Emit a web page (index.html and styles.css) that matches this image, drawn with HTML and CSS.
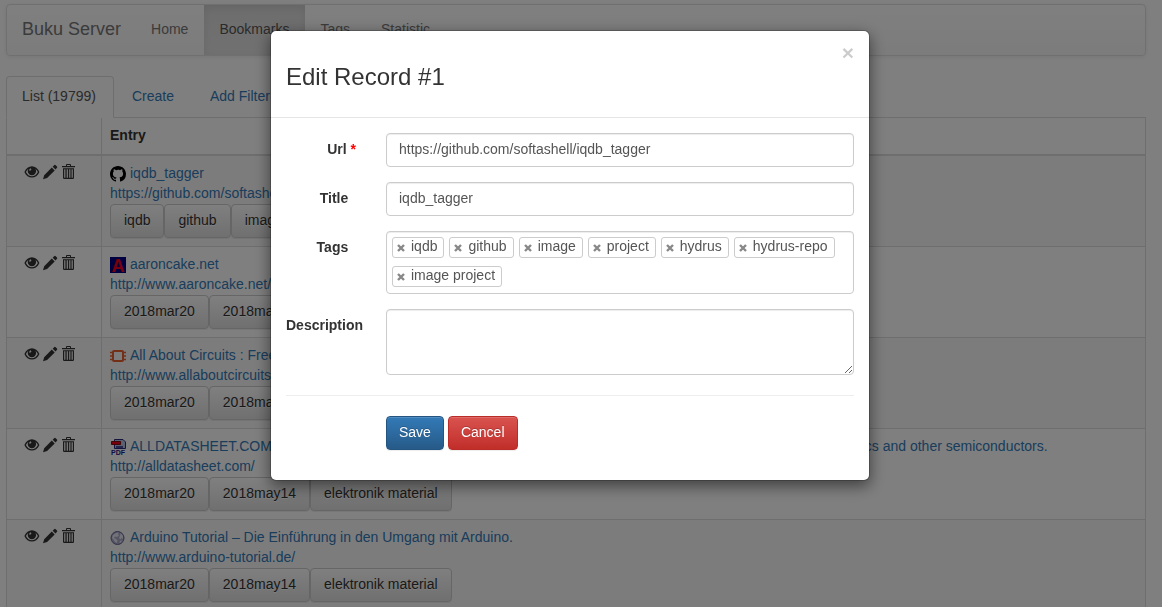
FILE: index.html
```html
<!DOCTYPE html>
<html lang="en">
<head>
<meta charset="utf-8">
<title>Bookmarks - Buku Server</title>
<link rel="stylesheet" href="styles.css">
</head>
<body>
<svg class="sprite" aria-hidden="true">
  <symbol id="eye" viewBox="0 0 16 16">
    <path fill-rule="evenodd" d="M.4 8C2 4.300 4.700 2.200 7.900 2.200S13.800 4.300 15.400 8C13.800 11.700 11.100 13.600 7.900 13.600S2 11.700 .4 8ZM1.900 8C3.300 10.800 5.400 12.300 7.900 12.300S12.500 10.800 13.900 8C13.200 6.500 12.400 5.500 11.400 4.700Q12.100 5.800 12.100 7.100A4.200 4.200 0 0 1 3.700 7.100Q3.700 5.800 4.400 4.700C3.400 5.500 2.600 6.500 1.900 8ZM6.700 4.200Q5.300 4.800 5.100 6.400L6.400 6.800Q6.600 5.900 7.500 5.500Z"/>
  </symbol>
  <symbol id="pencil" viewBox="0 0 16 16">
    <path d="M0 15.200L1.200 11.200L8.800 3.600L11.700 6.500L4.100 14.100ZM9.700 2.700L11.400 1.100Q12 .6 12.700 1.200L14 2.500Q14.600 3.200 14 3.800L12.500 5.500Z"/>
  </symbol>
  <symbol id="trash" viewBox="0 0 16 16">
    <path fill-rule="evenodd" d="M4 2V.8Q4 0 5 0H8Q9 0 9 .8V2H13V3.300H0V2ZM5 2H8V1H5ZM1 4.200H12V13.800Q12 15 10.800 15H2.200Q1 15 1 13.800ZM2.200 5.300V13.800H3.400V5.300ZM4.700 5.300V13.800H5.900V5.300ZM7.200 5.300V13.800H8.400V5.300ZM9.600 5.300V13.800H10.800V5.300Z"/>
  </symbol>
</svg>

<div class="page">
  <nav class="navbar">
    <a class="navbar-brand" href="#">Buku Server</a>
    <a class="navbar-link" href="#">Home</a>
    <a class="navbar-link active" href="#">Bookmarks</a>
    <a class="navbar-link" href="#">Tags</a>
    <a class="navbar-link" href="#">Statistic</a>
  </nav>

  <div class="tabs">
    <a class="tab active" href="#">List (19799)</a>
    <a class="tab" href="#">Create</a>
    <a class="tab" href="#">Add Filter</a>
  </div>

  <table class="records">
    <thead>
      <tr><th class="actions-col"></th><th>Entry</th></tr>
    </thead>
    <tbody>
      <tr>
        <td><div class="actions"><a href="#" aria-label="View"><svg class="icon"><use href="#eye"/></svg></a><a href="#" aria-label="Edit"><svg class="icon"><use href="#pencil"/></svg></a><button type="button" aria-label="Delete"><svg class="icon"><use href="#trash"/></svg></button></div></td>
        <td>
          <div class="entry-title">
            <svg class="favicon" viewBox="0 0 16 16"><path d="M8 0C3.580 0 0 3.580 0 8c0 3.540 2.290 6.530 5.470 7.590.4.070.55-.17.55-.38v-1.490c-2.230.48-2.700-.95-2.700-.95-.36-.92-.89-1.170-.89-1.170-.73-.5.060-.49.060-.49.800.060 1.230.83 1.230.83.71 1.220 1.870.87 2.330.66.070-.52.280-.87.510-1.070-1.780-.2-3.640-.89-3.640-3.950 0-.87.310-1.590.82-2.150-.08-.2-.36-1.020.08-2.120 0 0 .67-.21 2.200.82A7.600 7.600 0 0 1 8 3.860c.68 0 1.360.09 2 .27 1.530-1.040 2.200-.82 2.200-.82.44 1.100.16 1.920.08 2.120.51.56.82 1.270.82 2.150 0 3.070-1.870 3.750-3.650 3.950.29.25.54.73.54 1.480v2.200c0 .21.150.46.550.38A8 8 0 0 0 16 8c0-4.420-3.580-8-8-8Z"/></svg>
            <a href="#">iqdb_tagger</a>
          </div>
          <div><a href="#">https://github.com/softashell/iqdb_tagger</a></div>
          <div class="entry-tags"><a class="btn" href="#">iqdb</a><a class="btn" href="#">github</a><a class="btn" href="#">image</a><a class="btn" href="#">project</a><a class="btn" href="#">hydrus</a></div>
        </td>
      </tr>
      <tr>
        <td><div class="actions"><a href="#" aria-label="View"><svg class="icon"><use href="#eye"/></svg></a><a href="#" aria-label="Edit"><svg class="icon"><use href="#pencil"/></svg></a><button type="button" aria-label="Delete"><svg class="icon"><use href="#trash"/></svg></button></div></td>
        <td>
          <div class="entry-title">
            <svg class="favicon" viewBox="0 0 16 16"><rect width="16" height="16" fill="#000080"/><text class="favicon-letter" x="8" y="15" text-anchor="middle">A</text></svg>
            <a href="#">aaroncake.net</a>
          </div>
          <div><a href="#">http://www.aaroncake.net/</a></div>
          <div class="entry-tags"><a class="btn" href="#">2018mar20</a><a class="btn" href="#">2018may14</a></div>
        </td>
      </tr>
      <tr>
        <td><div class="actions"><a href="#" aria-label="View"><svg class="icon"><use href="#eye"/></svg></a><a href="#" aria-label="Edit"><svg class="icon"><use href="#pencil"/></svg></a><button type="button" aria-label="Delete"><svg class="icon"><use href="#trash"/></svg></button></div></td>
        <td>
          <div class="entry-title">
            <svg class="favicon" viewBox="0 0 16 16" fill="none" stroke="#e8602c"><rect x="3" y="3" width="10" height="10" rx="1" stroke-width="2"/><path d="M0 4.500H3M0 8H3M0 11.500H3M13 4.500H16M13 8H16M13 11.500H16" stroke-width="1.500"/></svg>
            <a href="#">All About Circuits : Free Electric Circuits Textbooks</a>
          </div>
          <div><a href="#">http://www.allaboutcircuits.com/</a></div>
          <div class="entry-tags"><a class="btn" href="#">2018mar20</a><a class="btn" href="#">2018may14</a></div>
        </td>
      </tr>
      <tr>
        <td><div class="actions"><a href="#" aria-label="View"><svg class="icon"><use href="#eye"/></svg></a><a href="#" aria-label="Edit"><svg class="icon"><use href="#pencil"/></svg></a><button type="button" aria-label="Delete"><svg class="icon"><use href="#trash"/></svg></button></div></td>
        <td>
          <div class="entry-title">
            <svg class="favicon" viewBox="0 0 16 16"><path d="M4.500.5H13L15.500 3V9.500H4.500Z" fill="#b5c4e4" stroke="#28287c"/><path d="M6 8H13" stroke="#28287c" stroke-width="1.500"/><path d="M1.500 2.500H10.500V5.500H1.500Z" fill="#f00018" stroke="#7c1010"/><text class="favicon-caption" x="8" y="16" text-anchor="middle">PDF</text></svg>
            <a href="#">ALLDATASHEET.COM - Datasheet search site for Electronic Components and Semiconductors, integrated circuits, triacs and other semiconductors.</a>
          </div>
          <div><a href="#">http://alldatasheet.com/</a></div>
          <div class="entry-tags"><a class="btn" href="#">2018mar20</a><a class="btn" href="#">2018may14</a><a class="btn" href="#">elektronik material</a></div>
        </td>
      </tr>
      <tr>
        <td><div class="actions"><a href="#" aria-label="View"><svg class="icon"><use href="#eye"/></svg></a><a href="#" aria-label="Edit"><svg class="icon"><use href="#pencil"/></svg></a><button type="button" aria-label="Delete"><svg class="icon"><use href="#trash"/></svg></button></div></td>
        <td>
          <div class="entry-title">
            <svg class="favicon" viewBox="0 0 16 16"><circle cx="7.500" cy="8" r="6.500" fill="#a9a9c4" stroke="#626092"/><path d="M6 3L9 2.500L8 4L9 5.500L7 7L5 6.500L4 8L6 9L7.500 10.500L6.500 13L5 12L4 10L2 8L3 5ZM10.500 3L13 6L13 9L11.500 8L10.500 9.500L9 8L10 6ZM10 11L12 10.500L11 12.500L9.500 13Z" fill="#e4e6f4"/></svg>
            <a href="#">Arduino Tutorial – Die Einführung in den Umgang mit Arduino.</a>
          </div>
          <div><a href="#">http://www.arduino-tutorial.de/</a></div>
          <div class="entry-tags"><a class="btn" href="#">2018mar20</a><a class="btn" href="#">2018may14</a><a class="btn" href="#">elektronik material</a></div>
        </td>
      </tr>
    </tbody>
  </table>
</div>

<div class="overlay">
  <div class="modal" role="dialog" aria-modal="true" aria-labelledby="modal-title">
    <div class="modal-header">
      <h3 id="modal-title">Edit Record #1</h3>
      <button class="close" type="button" aria-label="Close">×</button>
    </div>
    <form class="modal-body">
      <div class="field">
        <label for="url">Url <span class="required">*</span></label>
        <input class="control" id="url" type="text" value="https://github.com/softashell/iqdb_tagger">
      </div>
      <div class="field">
        <label for="title">Title&nbsp;&nbsp;</label>
        <input class="control" id="title" type="text" value="iqdb_tagger">
      </div>
      <div class="field">
        <span class="label" id="tags-label">Tags&nbsp;&nbsp;</span>
        <ul class="control chips" aria-labelledby="tags-label">
          <li><button type="button" aria-label="Remove iqdb"><svg viewBox="0 0 8 8"><path d="M1 1L7 7M7 1L1 7"/></svg></button>iqdb</li>
          <li><button type="button" aria-label="Remove github"><svg viewBox="0 0 8 8"><path d="M1 1L7 7M7 1L1 7"/></svg></button>github</li>
          <li><button type="button" aria-label="Remove image"><svg viewBox="0 0 8 8"><path d="M1 1L7 7M7 1L1 7"/></svg></button>image</li>
          <li><button type="button" aria-label="Remove project"><svg viewBox="0 0 8 8"><path d="M1 1L7 7M7 1L1 7"/></svg></button>project</li>
          <li><button type="button" aria-label="Remove hydrus"><svg viewBox="0 0 8 8"><path d="M1 1L7 7M7 1L1 7"/></svg></button>hydrus</li>
          <li><button type="button" aria-label="Remove hydrus-repo"><svg viewBox="0 0 8 8"><path d="M1 1L7 7M7 1L1 7"/></svg></button>hydrus-repo</li>
          <li><button type="button" aria-label="Remove image project"><svg viewBox="0 0 8 8"><path d="M1 1L7 7M7 1L1 7"/></svg></button>image project</li>
        </ul>
      </div>
      <div class="field">
        <label for="description">Description</label>
        <textarea class="control" id="description"></textarea>
      </div>
      <hr>
      <div class="form-buttons">
        <button class="btn btn-primary" type="submit">Save</button>
        <button class="btn btn-danger" type="button">Cancel</button>
      </div>
    </form>
  </div>
</div>
</body>
</html>
```

FILE: styles.css
```css
*, *::before, *::after { box-sizing: border-box; }

body {
  margin: 0;
  overflow: hidden;
  background: #fff;
  color: #333;
  font: 14px/20px "Liberation Sans", Arial, sans-serif;
}

a { color: #337ab7; text-decoration: none; }
button { font: inherit; cursor: pointer; }
.sprite { display: none; }

.page { padding: 4px 16px 0 6px; }

/* Navigation */
.navbar {
  display: flex;
  margin-bottom: 20px;
  border: 1px solid #e0e0e0;
  border-radius: 4px;
  background: linear-gradient(#fff, #f8f8f8);
  box-shadow: inset 0 1px 0 rgba(255, 255, 255, .15), 0 1px 5px rgba(0, 0, 0, .075);
}
.navbar a { padding: 14px 15px 16px; color: #777; text-shadow: 0 1px 0 rgba(255, 255, 255, .25); }
.navbar .navbar-brand { font-size: 18px; }
.navbar .navbar-link { padding-right: 16px; }
.navbar .active {
  background: linear-gradient(#dbdbdb, #e2e2e2);
  box-shadow: inset 0 3px 9px rgba(0, 0, 0, .075);
  color: #555;
}

.tabs { display: flex; gap: 2px; border-bottom: 1px solid #ddd; }
.tab {
  margin-bottom: -1px;
  padding: 9px 17px 11px 15px;
  border: 1px solid transparent;
  border-radius: 4px 4px 0 0;
}
.tab.active { border-color: #ddd #ddd #fff; background: #fff; color: #555; }

/* Records */
.records {
  width: 100%;
  border-collapse: separate;
  border-spacing: 0;
  border-left: 1px solid #ddd;
}
.records th, .records td {
  padding: 7px 8px 8px;
  border-right: 1px solid #ddd;
  border-bottom: 1px solid #ddd;
  text-align: left;
  vertical-align: top;
}
.records th { padding-bottom: 9px; border-bottom-width: 2px; }
.records .actions-col { width: 95px; }
.records tbody tr:nth-child(odd) { background: #f9f9f9; }

.actions { display: flex; gap: 3px; padding: 1px 0 0 9px; }
.actions a, .actions button { display: flex; padding: 0; border: 0; background: none; color: #333; }
.icon { width: 16px; height: 16px; fill: currentColor; }
.entry-title { display: flex; align-items: flex-start; gap: 4px; }
.favicon { flex: none; width: 16px; height: 16px; margin-top: 3px; }
.favicon-letter { fill: #f00018; font-size: 18px; font-weight: 700; }
.favicon-caption { fill: #202088; font-size: 7px; font-weight: 700; }
.entry-tags { display: flex; margin-top: 1px; }

.btn {
  padding: 5px 12px 7px;
  border: 1px solid #ccc;
  border-radius: 4px;
  background: linear-gradient(#fff, #e0e0e0);
  box-shadow: inset 0 1px 0 rgba(255, 255, 255, .15), 0 1px 1px rgba(0, 0, 0, .075);
  color: #333;
  text-shadow: 0 1px 0 #fff;
}
.entry-tags .btn { padding-right: 13px; padding-left: 13px; }
.btn-primary, .btn-danger { color: #fff; text-shadow: 0 -1px 0 rgba(0, 0, 0, .2); }
.btn-primary { border-color: #245580; background: linear-gradient(#337ab7, #265a88); }
.btn-danger { border-color: #b92c28; background: linear-gradient(#d9534f, #c12e2a); }

/* Modal */
.overlay {
  position: fixed;
  inset: 0;
  padding: 30px 22px 30px 0;
  overflow: hidden;
  background: rgba(0, 0, 0, .5);
}
.modal {
  max-width: 600px;
  margin: 0 auto;
  border: 1px solid rgba(0, 0, 0, .2);
  border-radius: 6px;
  background: #fff;
  background-clip: padding-box;
  box-shadow: 0 5px 15px rgba(0, 0, 0, .5);
}
.modal-header {
  display: flex;
  justify-content: space-between;
  align-items: flex-start;
  padding: 15px;
  border-bottom: 1px solid #e5e5e5;
}
.modal-header h3 { margin: 18px 0 12px; font-size: 24px; font-weight: 400; line-height: 26px; }
.close {
  padding: 0;
  border: 0;
  background: none;
  color: #000;
  font-size: 21px;
  font-weight: 700;
  line-height: 13px;
  opacity: .2;
}
.modal-body { padding: 15px 15px 30px; }
.field {
  display: grid;
  grid-template-columns: 70px minmax(0, 1fr);
  gap: 30px;
  margin-bottom: 15px;
}
.field label, .field .label { padding-top: 6px; font-weight: 700; text-align: right; white-space: nowrap; }
.required { color: #f00; }

.control {
  width: 100%;
  margin: 0;
  padding: 5px 12px 7px;
  border: 1px solid #ccc;
  border-radius: 4px;
  background: #fff;
  box-shadow: inset 0 1px 1px rgba(0, 0, 0, .075);
  color: #555;
  font: inherit;
}
input.control { height: 34px; }
textarea.control { height: 66px; resize: vertical; }

.chips { display: flex; flex-wrap: wrap; gap: 8px 5px; padding: 5px 5px 6px; list-style: none; }
.chips li {
  display: flex;
  padding: 0 6px 2px 4px;
  border: 1px solid #ccc;
  border-radius: 3px;
  line-height: 17px;
}
.chips button { display: flex; width: 14px; padding: 6px 0 0; border: 0; background: none; }
.chips svg { width: 8px; height: 8px; fill: none; stroke: #888; stroke-width: 2.4; }

hr { margin: 20px 0; border: 0; border-top: 1px solid #eee; }
.form-buttons { display: flex; gap: 4px; padding-left: 100px; }
```
